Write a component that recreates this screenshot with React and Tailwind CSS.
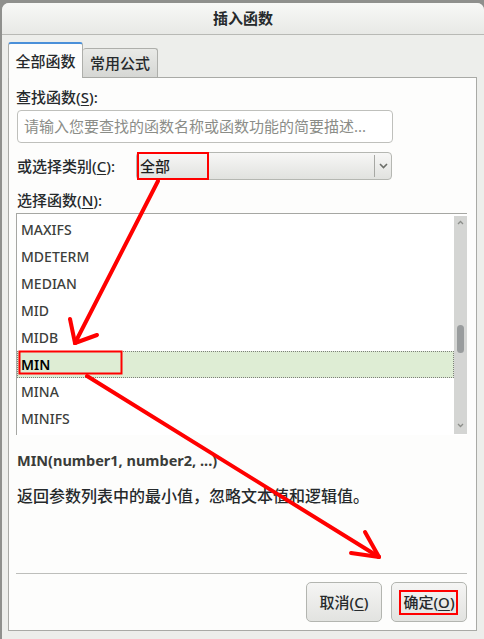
import React from "react";

const items = ["MAXIFS", "MDETERM", "MEDIAN", "MID", "MIDB", "MIN", "MINA", "MINIFS"];

function Key({ k }) {
  return <span className="underline underline-offset-2">{k}</span>;
}

function Annotations() {
  return (
    <svg className="absolute inset-0 pointer-events-none" width="484" height="639" viewBox="0 0 484 639">
      <g fill="none" stroke="#ff0000" strokeWidth="2">
        <rect x="138" y="153" width="70" height="26" />
        <rect x="19.5" y="351.5" width="102" height="22" />
        <rect x="400" y="591" width="57" height="23" />
      </g>
      <g fill="none" stroke="#ff0000" strokeWidth="4" strokeLinecap="round">
        <line x1="158" y1="181" x2="75" y2="343" />
        <line x1="70" y1="319" x2="75" y2="343" />
        <line x1="97" y1="335" x2="75" y2="343" />
        <line x1="87" y1="376" x2="379" y2="557" />
        <line x1="365" y1="532" x2="379" y2="557" />
        <line x1="351" y1="553" x2="379" y2="557" />
      </g>
    </svg>
  );
}

export default function App() {
  return (
    <div
      className="relative w-[484px] h-[639px] overflow-hidden bg-[#8f908d] pt-[3px] pl-[2px] text-[#262a2c]"
      style={{ fontFamily: '"Noto Sans", "Noto Sans CJK SC", sans-serif' }}
    >
      <div className="h-full rounded-t-[7px] bg-[#edeeeb] flex flex-col overflow-hidden">
        {/* title bar */}
        <div className="h-[32px] shrink-0 flex items-center justify-center bg-gradient-to-b from-[#f7f8f6] to-[#e8e9e6] border-b border-[#b8b9b5]">
          <span className="text-[15px] font-bold leading-none">插入函数</span>
        </div>

        <div className="flex-1 flex flex-col pl-[6px] pr-[7px] pt-[7px] pb-[8px]">
          {/* tabs */}
          <div className="flex items-end h-[35px]">
            <div className="h-[36px] w-[75px] -mb-px relative z-10 flex items-center justify-center bg-[#fdfdfc] border border-[#aeafab] border-b-0 border-t-[#4a90d9] border-t-2 rounded-t-[3px] text-[15px] font-medium">
              全部函数
            </div>
            <div className="h-[29px] w-[75px] flex items-center justify-center bg-gradient-to-b from-[#e9eae7] to-[#d6d7d4] border border-[#aeafab] border-l-0 border-b-0 rounded-t-[3px] text-[15px] font-medium">
              常用公式
            </div>
          </div>

          {/* panel */}
          <div className="flex-1 flex flex-col bg-[#fdfdfc] border border-[#a9aaa6] pl-[7px] pr-[9px]">
            <div className="mt-[8px] h-[22px] flex items-center text-[15px] font-medium">
              查找函数(<Key k="S" />):
            </div>
            <div className="mt-[2px] ml-px w-[376px] h-[33px] flex items-center px-[6px] border border-[#bfc0bc] rounded-[4px] bg-white text-[15px] text-[#8b8d88]">
              请输入您要查找的函数名称或函数功能的简要描述...
            </div>

            <div className="mt-[9px] h-[28px] flex items-center">
              <div className="w-[120px] pl-px text-[15px] font-medium">
                或选择类别(<Key k="C" />):
              </div>
              <div className="w-[256px] h-[28px] flex items-center border border-[#b5b7b2] rounded-[4px] bg-gradient-to-b from-[#f7f7f6] to-[#e1e2df]">
                <span className="flex-1 pl-[3px] text-[15px] font-medium text-[#1e1e1e]">全部</span>
                <span className="w-px h-[22px] bg-[#a7a8a4]" />
                <span className="w-[16px] flex justify-center">
                  <svg width="9" height="6" viewBox="0 0 9 6">
                    <path d="M1 1l3.5 3.5L8 1" fill="none" stroke="#6c6e69" strokeWidth="1.6" />
                  </svg>
                </span>
              </div>
            </div>

            <div className="mt-[10px] h-[20px] flex items-center pl-px text-[15px] font-medium">
              选择函数(<Key k="N" />):
            </div>

            {/* list */}
            <div className="mt-[3px] h-[222px] flex border-t border-l border-[#a6a7a3] bg-white">
              <div className="flex-1 pt-[2px]">
                {items.map((it) =>
                  it === "MIN" ? (
                    <div
                      key={it}
                      className="h-[27px] flex items-center pl-[3px] bg-[#deedd4] border border-dotted border-[#7d7f7a] text-[14px] font-semibold text-black"
                    >
                      {it}
                    </div>
                  ) : (
                    <div key={it} className="h-[27px] flex items-center pl-[4px] text-[14px] font-medium text-[#3d3f3c]">
                      {it}
                    </div>
                  )
                )}
              </div>
              <div className="w-[13px] h-[218px] mt-[2px] bg-[#d4d5d3] flex flex-col items-center">
                <svg className="mt-[4px]" width="7" height="5" viewBox="0 0 7 5">
                  <path d="M1 4l2.5-2.5L6 4" fill="none" stroke="#8c8e8a" strokeWidth="1.3" />
                </svg>
                <div className="mt-[100px] w-[7px] h-[28px] rounded-full bg-[#999c9d]" />
                <div className="flex-1" />
                <svg className="mb-[6px]" width="7" height="5" viewBox="0 0 7 5">
                  <path d="M1 1l2.5 2.5L6 1" fill="none" stroke="#8c8e8a" strokeWidth="1.3" />
                </svg>
              </div>
            </div>

            <div className="mt-[16px] h-[20px] flex items-center pl-px text-[14.5px] font-bold text-[#3a3c39]">
              MIN(number1, number2, ...)
            </div>
            <div className="mt-[15px] h-[20px] flex items-center pl-px text-[16px] font-medium">
              返回参数列表中的最小值，忽略文本值和逻辑值。
            </div>

            <div className="flex-1" />
            <div className="h-px bg-[#bdbebb]" />
            <div className="mt-[8px] mb-[8px] flex justify-end gap-[9px]">
              <button className="w-[76px] h-[40px] flex items-center justify-center border border-[#b3b5b0] rounded-[5px] bg-gradient-to-b from-[#f5f5f4] to-[#e2e3e0] text-[15px] font-medium">
                取消(<Key k="C" />)
              </button>
              <button className="w-[76px] h-[40px] flex items-center justify-center border border-[#b3b5b0] rounded-[5px] bg-gradient-to-b from-[#f5f5f4] to-[#e2e3e0] text-[15px] font-medium">
                确定(<Key k="O" />)
              </button>
            </div>
          </div>
        </div>
      </div>
      <Annotations />
    </div>
  );
}
